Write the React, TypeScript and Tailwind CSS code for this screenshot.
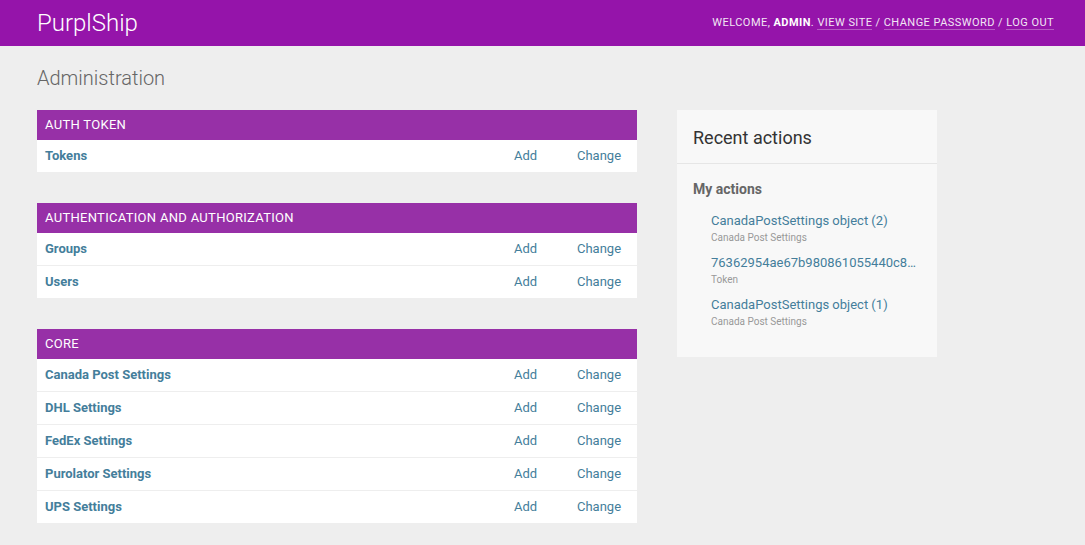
const MODULES = [
  { caption: "Auth Token", models: ["Tokens"] },
  { caption: "Authentication and Authorization", models: ["Groups", "Users"] },
  {
    caption: "Core",
    models: ["Canada Post Settings", "DHL Settings", "FedEx Settings", "Purolator Settings", "UPS Settings"],
  },
];

const ACTIONS = [
  { title: "CanadaPostSettings object (2)", type: "Canada Post Settings" },
  { title: "76362954ae67b980861055440c8a1f20c7bd1e3a", type: "Token" },
  { title: "CanadaPostSettings object (1)", type: "Canada Post Settings" },
];

export default function App() {
  return (
    <div className="min-h-[545px] bg-[#eeeeee] font-['Roboto',sans-serif] text-[#333]">
      <header className="flex h-[46px] items-center justify-between bg-[#9514aa] pl-[37px] pr-[31px] text-white">
        <a href="#" className="text-[24px] font-light leading-none">PurplShip</a>
        <div className="text-[11px] uppercase tracking-[0.45px] text-[#f2e6f4]">
          Welcome, <strong className="font-bold text-white">admin</strong>.{" "}
          <a href="#" className="border-b border-white/30">View site</a> /{" "}
          <a href="#" className="border-b border-white/30">Change password</a> /{" "}
          <a href="#" className="border-b border-white/30">Log out</a>
        </div>
      </header>

      <main className="px-[37px] pt-[20px]">
        <h1 className="mb-[20px] text-[20px] font-light leading-[24px] text-[#666]">Administration</h1>

        <div className="flex gap-[40px]">
          <div className="flex w-[600px] flex-col gap-[31px]">
            {MODULES.map((m) => (
              <section key={m.caption} className="bg-white">
                <div className="flex h-[30px] items-center bg-[#9730a7] px-2 text-[13px] uppercase tracking-[0.3px] text-white">
                  {m.caption}
                </div>
                {m.models.map((name, i) => (
                  <div
                    key={name}
                    className={`box-content flex h-[32px] items-center text-[13px] text-[#447e9b] ${i > 0 ? "border-t border-[#eeeeee]" : ""}`}
                  >
                    <a href="#" className="flex-1 pl-2 font-bold">{name}</a>
                    <a href="#" className="w-[63px]">Add</a>
                    <a href="#" className="w-[60px]">Change</a>
                  </div>
                ))}
              </section>
            ))}
          </div>

          <aside className="h-[247px] w-[260px] bg-[#f8f8f8]">
            <h2 className="border-b border-[#e6e6e6] px-4 pb-[15px] pt-[17px] text-[18px] leading-[21px] text-[#333]">Recent actions</h2>
            <h3 className="px-4 pt-[15px] text-[14px] font-bold leading-[20px] text-[#666]">My actions</h3>
            <ul className="pl-[34px] pr-4 pt-[12px]">
              {ACTIONS.map((a) => (
                <li key={a.title} className="mb-[8px]">
                  <a href="#" className="block truncate text-[13px] leading-[20px] text-[#447e9b]">{a.title}</a>
                  <span className="block text-[10px] leading-[14px] text-[#999]">{a.type}</span>
                </li>
              ))}
            </ul>
          </aside>
        </div>
      </main>
    </div>
  );
}
